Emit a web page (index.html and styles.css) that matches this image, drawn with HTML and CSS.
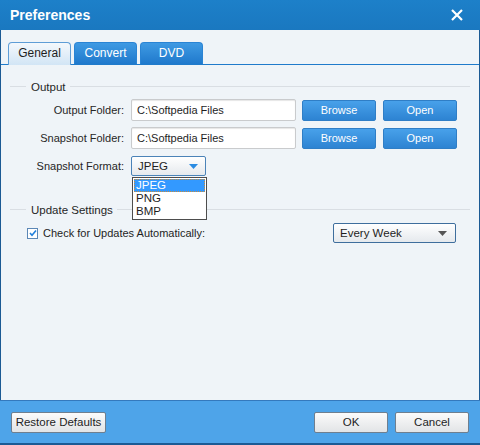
FILE: index.html
```html
<!DOCTYPE html>
<html lang="en">
<head>
  <meta charset="UTF-8">
  <title>Preferences</title>
  <link rel="stylesheet" href="styles.css">
</head>
<body>
  <div class="window">
    <div class="titlebar">
      <span class="title">Preferences</span>
      <svg class="close" width="12" height="12" viewBox="0 0 12 12">
        <path d="M1 1 L11 11 M11 1 L1 11" stroke="#fff" stroke-width="2.2" fill="none"/>
      </svg>
    </div>

    <div class="content">
      <div class="tabs">
        <div class="tab active">General</div>
        <div class="tab">Convert</div>
        <div class="tab">DVD</div>
      </div>

      <div class="panel">
        <div class="section-head">
          <span class="line short"></span>
          <span class="section-title">Output</span>
          <span class="line"></span>
        </div>

        <div class="row">
          <label>Output Folder:</label>
          <div class="input">C:\Softpedia Files</div>
          <button class="blue-btn">Browse</button>
          <button class="blue-btn">Open</button>
        </div>
        <div class="row">
          <label>Snapshot Folder:</label>
          <div class="input">C:\Softpedia Files</div>
          <button class="blue-btn">Browse</button>
          <button class="blue-btn">Open</button>
        </div>
        <div class="row format-row">
          <label>Snapshot Format:</label>
          <div class="select format">
            <span>JPEG</span>
            <svg width="9" height="5" viewBox="0 0 9 5"><path d="M0 0 L9 0 L4.5 5 Z" fill="#2a8be2"/></svg>
            <ul class="droplist">
              <li class="picked">JPEG</li>
              <li>PNG</li>
              <li>BMP</li>
            </ul>
          </div>
        </div>

        <div class="section-head update-head">
          <span class="line short"></span>
          <span class="section-title">Update Settings</span>
          <span class="line"></span>
        </div>

        <div class="check-row">
          <div class="check">
            <span class="box">
              <svg width="8" height="8" viewBox="0 0 8 8"><path d="M1 4 L3 6.2 L7 1.5" stroke="#1f7fdc" stroke-width="1.6" fill="none"/></svg>
            </span>
            Check for Updates Automatically:
          </div>
          <div class="select every">
            <span>Every Week</span>
            <svg width="9" height="5" viewBox="0 0 9 5"><path d="M0 0 L9 0 L4.5 5 Z" fill="#555"/></svg>
          </div>
        </div>
      </div>
    </div>

    <div class="footer">
      <button class="gray-btn restore">Restore Defaults</button>
      <div class="footer-right">
        <button class="gray-btn">OK</button>
        <button class="gray-btn">Cancel</button>
      </div>
    </div>
  </div>
</body>
</html>
```

FILE: styles.css
```css
body {
  margin: 0;
  padding: 0;
  font-family: 'Liberation Sans', Arial, sans-serif;
  font-size: 11px;
  color: #1e1e1e;
  background: #ffffff;
}

.window {
  width: 480px;
  height: 445px;
  box-sizing: border-box;
  display: flex;
  flex-direction: column;
  border: 1px solid #1b5a94;
  border-top: none;
  background: #eff4f8;
}

.titlebar {
  height: 30px;
  margin: 0 -1px;
  display: flex;
  align-items: center;
  justify-content: space-between;
  padding: 0 17px 0 10px;
  background: linear-gradient(#1d80c9, #1a78c0);
  color: white;
}

.title {
  font-size: 14px;
  font-weight: bold;
}

.close {
  display: block;
  margin-top: -1px;
}

.content {
  flex: 1;
  display: flex;
  flex-direction: column;
  padding-top: 12px;
}

.tabs {
  display: flex;
  gap: 3px;
  padding-left: 7px;
  border-bottom: 1px solid #1f7bcb;
}

.tab {
  width: 61px;
  height: 21px;
  line-height: 21px;
  text-align: center;
  font-size: 12px;
  color: white;
  border: 1px solid #2a84d4;
  border-bottom: none;
  border-radius: 4px 4px 0 0;
  background: linear-gradient(#3f9ae3, #1f79cc);
}

.tab.active {
  color: #1e1e1e;
  border-color: #5e9dd6;
  background: linear-gradient(#f4f8fc, #d2e5f5);
  height: 22px;
  margin-bottom: -1px;
}

.panel {
  position: relative;
  flex: 1;
}

.section-head {
  display: flex;
  align-items: center;
  margin: 15px 9px 0 9px;
  height: 13px;
}

.section-head .line {
  flex: 1;
  height: 1px;
  background: #d9dee3;
}

.section-head .line.short {
  flex: none;
  width: 16px;
}

.section-title {
  padding: 0 4px 0 5px;
  font-size: 11.5px;
  color: #262626;
}

.update-head {
  margin-top: 27px;
}

.row {
  display: flex;
  align-items: center;
  height: 22px;
  margin-top: 6px;
}

.row:first-of-type {
  margin-top: 5px;
}

.row label {
  width: 123px;
  text-align: right;
  color: #262626;
}

.input {
  width: 158px;
  height: 20px;
  line-height: 20px;
  margin-left: 7px;
  padding-left: 5px;
  background: white;
  border: 1px solid #c9cbcd;
  border-radius: 2px;
  box-shadow: inset 0 1px 1px #e6e6e6;
}

.blue-btn {
  width: 74px;
  height: 21px;
  margin-left: 6px;
  padding: 0;
  font-family: inherit;
  font-size: 11px;
  color: white;
  border: 1px solid #2f7ec6;
  border-radius: 2px;
  background: linear-gradient(#48a1ea, #2d83d2);
}

.blue-btn + .blue-btn {
  margin-left: 7px;
}

.format-row {
  height: 20px;
  margin-top: 7px;
}

.select {
  position: relative;
  box-sizing: border-box;
  height: 20px;
  display: flex;
  align-items: center;
  justify-content: space-between;
  border-radius: 2px;
  background: linear-gradient(#ffffff, #e5e9ed);
}

.select span {
  font-size: 11.5px;
}

.format {
  width: 75px;
  margin-left: 7px;
  padding: 0 7px 0 6px;
  border: 1px solid #4b83b8;
}

.droplist {
  position: absolute;
  top: 20px;
  left: 0;
  width: 75px;
  box-sizing: border-box;
  margin: 0;
  padding: 1px;
  list-style: none;
  background: white;
  border: 1px solid #4d4d4d;
  z-index: 2;
}

.droplist li {
  height: 13px;
  line-height: 13px;
  padding-left: 2px;
  font-size: 11.5px;
}

.droplist li.picked {
  background: #3399ff;
  color: white;
  outline: 1px dotted #c88b3a;
  outline-offset: -1px;
}

.check-row {
  display: flex;
  align-items: center;
  justify-content: space-between;
  margin-top: 7px;
  padding: 0 23px 0 26px;
}

.check {
  display: flex;
  align-items: center;
  gap: 5px;
  font-size: 11px;
}

.box {
  width: 9px;
  height: 9px;
  border: 1px solid #5b87b6;
  background: white;
  display: flex;
  align-items: center;
  justify-content: center;
}

.every {
  width: 123px;
  padding: 0 8px 0 6px;
  border: 1px solid #3e6e9d;
}

.footer {
  height: 42px;
  margin: 0 -1px;
  display: flex;
  align-items: center;
  justify-content: space-between;
  padding: 0 11px;
  background: #4ea4e9;
  border-top: 1px solid #3479bd;
  border-bottom: 1px solid #1b5a94;
}

.footer-right {
  display: flex;
  gap: 7px;
}

.gray-btn {
  width: 74px;
  height: 21px;
  padding: 0;
  font-family: inherit;
  font-size: 11.5px;
  color: #1e1e1e;
  border: 1px solid #6f7f8f;
  border-radius: 2px;
  background: linear-gradient(#fbfbfb, #e2e4e6);
}

.gray-btn.restore {
  width: 95px;
}
```
